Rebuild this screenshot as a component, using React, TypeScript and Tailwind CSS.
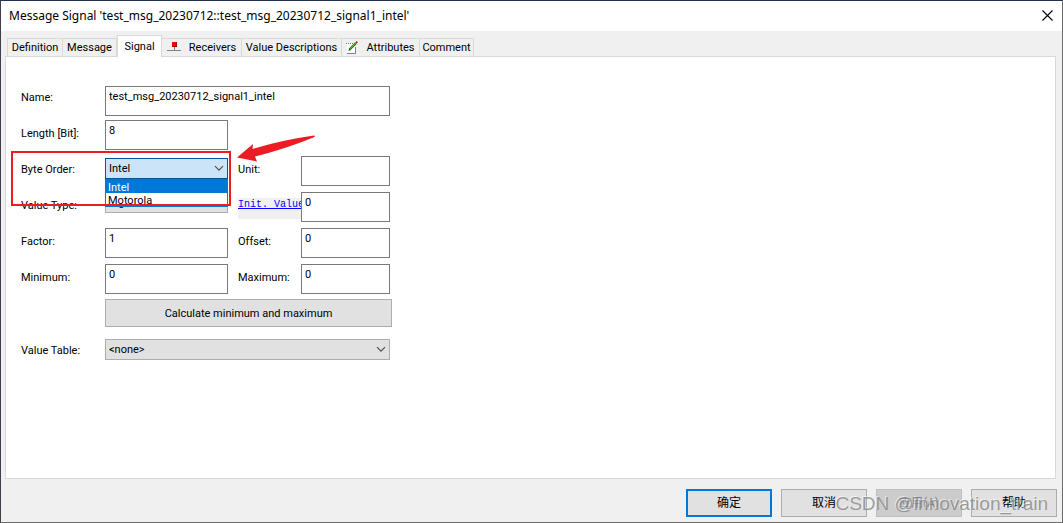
import { useState } from 'react';
import type { ReactNode } from 'react';

const field =
  'h-[30px] w-full min-w-0 border border-[#7a7a7a] bg-white pt-px pr-1 pb-[11px] pl-[3px] outline-none';
const combo = 'h-[21px] w-full appearance-none border pt-0.5 pr-5 pl-[3px] outline-none';
const caption = 'w-[84px] shrink-0 pt-1.5 leading-4';
const captionRight = 'ml-2.5 w-[63px] shrink-0 pt-1.5 leading-4';
const footerButton = 'h-7 w-[86px] border border-[#adadad] bg-[#e1e1e1]';

function Chevron() {
  return (
    <svg
      className="pointer-events-none absolute top-[7px] right-1 h-[7px] w-[10px]"
      viewBox="0 0 10 7"
      fill="none"
      stroke="#505050"
      strokeWidth="1.2"
      aria-hidden="true"
    >
      <path d="M1 1.2 5 5.2 9 1.2" />
    </svg>
  );
}

function ReceiverIcon() {
  return (
    <svg width="14" height="12" viewBox="0 0 14 12" aria-hidden="true" shapeRendering="crispEdges">
      <path d="M5 0h5v5H5z" fill="#f00" />
      <path d="M9 0h1v5H5V4h4z" fill="#b00000" />
      <path d="M7 5h1v3H7zM0 8h14v1H0z" fill="#808080" />
    </svg>
  );
}

function AttributeIcon() {
  return (
    <svg width="12" height="14" viewBox="0 0 12 14" aria-hidden="true">
      <path d="M1 3h8v10H1z" fill="#fff" />
      <path d="M0 2.5h8" stroke="#777" strokeDasharray="1 1" />
      <path d="M1 12.5h8.5V6" stroke="#808080" fill="none" />
      <path d="M3.5 8.5 10 2" stroke="#157a15" strokeWidth="2.4" />
      <path d="M4 7.8 9.6 2.2" stroke="#c8c832" strokeWidth=".7" />
      <path d="m9.4 1.2 1.2-1.2 1.3 1.3-1.2 1.2z" fill="#e01010" />
      <path d="m2.5 9.8.6-2 1.4 1.4z" fill="#222" />
    </svg>
  );
}

const tabs: { name: string; width: string; icon?: ReactNode }[] = [
  { name: 'Definition', width: 'w-14' },
  { name: 'Message', width: 'w-[54px]' },
  { name: 'Signal', width: 'w-[45px]' },
  { name: 'Receivers', width: 'w-20', icon: <ReceiverIcon /> },
  { name: 'Value Descriptions', width: 'w-[100px]' },
  { name: 'Attributes', width: 'w-[78px]', icon: <AttributeIcon /> },
  { name: 'Comment', width: 'w-[54px]' },
];

export default function App() {
  const [active, setActive] = useState('Signal');
  const [order, setOrder] = useState('Intel');
  const [open, setOpen] = useState(true);

  return (
    <div className="relative flex min-h-screen flex-col border border-t-[#22304f] border-r-[#6b6b6b] border-b-[#6b6b6b] border-l-[#3c4048] bg-[#f0f0f0] font-['Roboto','Noto_Sans_CJK_SC',sans-serif] text-[11px] text-black">
      <header className="flex h-[30px] items-center justify-between bg-white pr-[9px] pb-px pl-2">
        <h1 className="font-['Noto_Sans',sans-serif] text-xs">
          Message Signal 'test_msg_20230712::test_msg_20230712_signal1_intel'
        </h1>
        <button type="button" aria-label="Close">
          <svg width="11" height="11" viewBox="0 0 11 11" stroke="#000" strokeWidth="1.1" aria-hidden="true">
            <path d="M.5.5l10 10M10.500.5l-10 10" />
          </svg>
        </button>
      </header>

      <div role="tablist" className="flex h-[25px] items-end pl-1.5">
        {tabs.map((tab) => (
          <button
            key={tab.name}
            type="button"
            role="tab"
            aria-selected={active === tab.name}
            onClick={() => setActive(tab.name)}
            className={`${tab.width} flex shrink-0 justify-center gap-2 whitespace-nowrap border-t border-r border-[#d9d9d9] leading-4 first:border-l ${
              active === tab.name ? 'relative z-10 -mb-px h-[22px] items-start border-l bg-white pt-[3px]' : 'h-[18px] items-center pt-px'
            }`}
          >
            {tab.icon}
            {tab.name}
          </button>
        ))}
      </div>

      <main className="mr-1.5 ml-1 flex-1 border border-[#d9d9d9] bg-white pt-[29px] pl-[15px]">
        <form className="w-[371px]" onSubmit={(e) => e.preventDefault()}>
          <div className="flex pr-0.5">
            <label htmlFor="name" className="w-[84px] shrink-0 pt-1 leading-4">Name:</label>
            <input id="name" className={field} defaultValue="test_msg_20230712_signal1_intel" />
          </div>

          <div className="mt-1 flex">
            <label htmlFor="length" className={caption}>Length [Bit]:</label>
            <div className="w-[123px]">
              <input id="length" className={field} defaultValue="8" />
            </div>
          </div>

          <div className="mt-1.5 flex h-[30px] pr-0.5">
            <label htmlFor="order" className={caption}>Byte Order:</label>
            <div className="relative mt-0.5 w-[123px] shrink-0">
              <select
                id="order"
                value={order}
                onChange={(e) => setOrder(e.target.value)}
                onKeyDown={() => setOpen(false)}
                className={`${combo} border-[#005499] bg-[#cce4f7]`}
              >
                <option>Intel</option>
                <option>Motorola</option>
              </select>
              <Chevron />
              {open && (
                <div
                  role="listbox"
                  aria-label="Byte Order"
                  className="absolute top-[21px] left-0 z-10 flex w-full flex-col border border-[#0078d7] bg-white"
                >
                  {['Intel', 'Motorola'].map((item) => (
                    <button
                      key={item}
                      type="button"
                      role="option"
                      aria-selected={item === order}
                      onClick={() => {
                        setOrder(item);
                        setOpen(false);
                      }}
                      className={`h-[13px] pl-0.5 text-left leading-4 ${item === order ? 'bg-[#0078d7] text-white' : ''}`}
                    >
                      {item}
                    </button>
                  ))}
                </div>
              )}
              <div className="pointer-events-none absolute -top-[7px] -right-[3px] -left-[94px] z-20 h-[55px] border-2 border-[#ed1c24]" />
              <svg
                className="pointer-events-none absolute -top-6 left-[132px] z-20 h-[28px] w-[79px]"
                viewBox="0 0 79 28"
                fill="#ed1c24"
                aria-hidden="true"
              >
                <path d="M0 23.500 16 10 15.500 15Q45 6 77 1.500 78.500 2 77 3.200 48 15 18 22.500L20 27.500Z" />
              </svg>
            </div>
            <label htmlFor="unit" className={captionRight}>Unit:</label>
            <input id="unit" className={field} />
          </div>

          <div className="mt-1.5 flex pr-0.5">
            <label htmlFor="type" className={caption}>Value Type:</label>
            <div className="relative w-[123px] shrink-0">
              <select id="type" className={`${combo} border-[#adadad] bg-[#e1e1e1]`} defaultValue="Signed">
                <option>Signed</option>
                <option>Unsigned</option>
              </select>
              <Chevron />
            </div>
            <a
              href="#init"
              id="init-label"
              className="mt-1.5 ml-2.5 h-[21px] w-[63px] shrink-0 overflow-hidden whitespace-nowrap bg-[#f0f0f0] font-['Liberation_Mono',monospace] text-[10px] leading-[14px] text-[#0000ff] underline"
            >
              Init. Value
            </a>
            <input id="init" aria-labelledby="init-label" className={field} defaultValue="0" />
          </div>

          <div className="mt-1.5 flex pr-0.5">
            <label htmlFor="factor" className={caption}>Factor:</label>
            <div className="w-[123px] shrink-0">
              <input id="factor" className={field} defaultValue="1" />
            </div>
            <label htmlFor="offset" className={captionRight}>Offset:</label>
            <input id="offset" className={field} defaultValue="0" />
          </div>

          <div className="mt-1.5 flex pr-0.5">
            <label htmlFor="min" className={caption}>Minimum:</label>
            <div className="w-[123px] shrink-0">
              <input id="min" className={field} defaultValue="0" />
            </div>
            <label htmlFor="max" className={captionRight}>Maximum:</label>
            <input id="max" className={field} defaultValue="0" />
          </div>

          <div className="mt-[5px] flex pl-[84px]">
            <button type="button" className="h-7 w-full border border-[#adadad] bg-[#e1e1e1] pt-0.5">
              Calculate minimum and maximum
            </button>
          </div>

          <div className="mt-3 flex pr-0.5">
            <label htmlFor="table" className="w-[84px] shrink-0 pt-1 leading-4">Value Table:</label>
            <div className="relative flex-1">
              <select id="table" className={`${combo} border-[#adadad] bg-[#e1e1e1]`}>
                <option>&lt;none&gt;</option>
              </select>
              <Chevron />
            </div>
          </div>
        </form>
      </main>

      <footer className="relative flex h-[43px] items-end justify-end gap-[9px] pr-[5px] pb-[5px] text-xs">
        <button type="button" className="h-7 w-[86px] border-2 border-[#0078d7] bg-[#e1e1e1]">确定</button>
        <button type="button" className={footerButton}>取消</button>
        <button type="button" disabled className="h-7 w-[86px] border border-[#bfbfbf] bg-[#cccccc] text-[#838383]">
          应用(A)
        </button>
        <button type="button" className={footerButton}>帮助</button>
        <span className="pointer-events-none absolute right-3.5 bottom-1.5 font-['Liberation_Sans',sans-serif] text-[19px] leading-6 text-[#808080]/75 [text-shadow:-1px_-1px_0_rgba(255,255,255,0.55)]">
          CSDN @innovation_train
        </span>
      </footer>
    </div>
  );
}
